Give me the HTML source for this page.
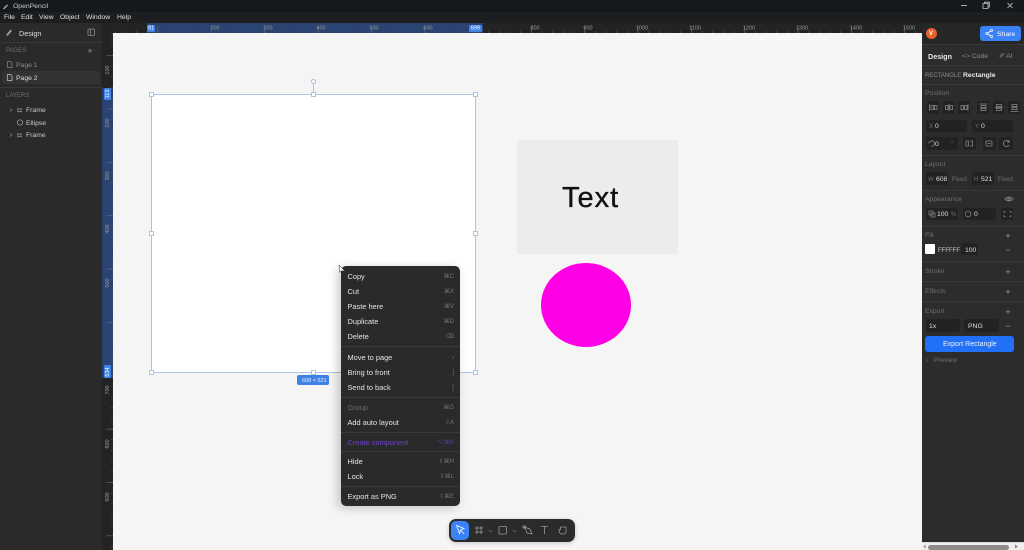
<!DOCTYPE html>
<html><head><meta charset="utf-8"><title>OpenPencil</title>
<style>
html,body{margin:0;padding:0;width:1024px;height:550px;overflow:hidden;background:#2b2b2b}
#r{position:relative;width:1024px;height:550px;overflow:hidden;font-family:"Liberation Sans",sans-serif;filter:blur(.25px)}
#r div,#r span.t{position:absolute}
.t{position:absolute;white-space:nowrap;line-height:10px;font-size:6.8px;color:#d8d8d8;transform:translateY(-4px)}
.g{color:#8a8a8a}.d{color:#6f6f6f}.b{font-weight:bold;color:#e8e8e8}
.line{height:1px;background:#383838}
.f{background:#222;border-radius:2px}
.m{left:347.5px;font-size:7.4px;color:#e4e4e4}
.k{right:570px;font-size:6px;color:#777;text-align:right}
.rl{font-size:5.5px;color:#9a9a9a;transform:translate(-50%,-4.5px)}
.rv{font-size:5.5px;color:#9a9a9a;left:108px;transform:translate(-50%,-50%) rotate(-90deg)}
.h{width:2.5px;height:2.5px;background:#fff;border:1px solid #a8c6ec}
.sep{left:341px;width:119px;height:1px;background:#3a3a3a}
.p{font-size:9px;color:#999;line-height:10px;text-align:center;width:10px}
svg{position:absolute;overflow:visible}
</style></head><body><div id="r">

<!-- chrome -->
<div style="left:0;top:0;width:1024px;height:12px;background:#14191c"></div>
<div style="left:0;top:12px;width:1024px;height:11px;background:#1c1e1f"></div>
<div style="left:0;top:23px;width:102px;height:527px;background:#2a2a2a"></div>
<div style="left:102px;top:23px;width:820px;height:10px;background:#232323"></div>
<div style="left:102px;top:23px;width:11px;height:527px;background:#232323"></div>
<div style="left:113px;top:33px;width:809px;height:517px;background:#f5f5f5"></div>
<div style="left:922px;top:23px;width:102px;height:527px;background:#2c2c2c"></div>

<!-- title -->
<svg style="left:0;top:0" width="12" height="12"><path d="M3 8.500L7 4.500L8 5.500L4 9.500Z" fill="#aaa"/></svg>
<span class="t" style="left:13px;top:6px;color:#c8c8c8">OpenPencil</span>
<span class="t" style="left:4px;top:17px;color:#e0e0e0">File</span>
<span class="t" style="left:21px;top:17px;color:#e0e0e0">Edit</span>
<span class="t" style="left:39px;top:17px;color:#e0e0e0">View</span>
<span class="t" style="left:60px;top:17px;color:#e0e0e0">Object</span>
<span class="t" style="left:86px;top:17px;color:#e0e0e0">Window</span>
<span class="t" style="left:117px;top:17px;color:#e0e0e0">Help</span>
<svg style="left:955px;top:0" width="69" height="12" fill="none" stroke="#ccc" stroke-width=".8"><path d="M6 5.500H12"/><path d="M28 3.500H33V8.500H28ZM29.500 3.500V2.200H34.300V7H33"/><path d="M52.500 3L57.500 8M57.500 3L52.500 8"/></svg>

<!-- left panel -->
<svg style="left:4px;top:27px" width="10" height="10"><path d="M2 8L6.500 2.500L8 4L3.500 9Z" fill="#999"/></svg>
<span class="t" style="left:19px;top:32.500px;font-size:7.200px;color:#ddd">Design</span>
<svg style="left:87px;top:28px" width="9" height="9" fill="none" stroke="#8a8a8a" stroke-width=".8"><rect x="1" y="1" width="6.500" height="6.500" rx="1"/><path d="M3.500 1V7.500"/></svg>
<div class="line" style="left:0;top:42px;width:102px"></div>
<span class="t d" style="left:6px;top:50px;font-size:6px">PAGES</span>
<span class="t p" style="left:85px;top:50px">+</span>
<svg style="left:7px;top:61px" width="6" height="20" fill="none" stroke="#888" stroke-width=".7"><path d="M.5 .5H3.500L5 2V6.500H.5Z"/></svg>
<span class="t g" style="left:16px;top:64.500px">Page 1</span>
<div style="left:2px;top:71px;width:98px;height:13px;background:#333;border-radius:2px"></div>
<svg style="left:7px;top:74px" width="6" height="8" fill="none" stroke="#ccc" stroke-width=".7"><path d="M.5 .5H3.500L5 2V6.500H.5Z"/></svg>
<span class="t" style="left:16px;top:77.500px;color:#ddd">Page 2</span>
<div class="line" style="left:0;top:87px;width:102px"></div>
<span class="t d" style="left:6px;top:95px;font-size:6px">LAYERS</span>
<svg style="left:8px;top:105px" width="20" height="36" fill="none" stroke="#888" stroke-width=".7"><path d="M2 3.500L4 5L2 6.500M2 28.500L4 30L2 31.500"/><path d="M10 3V7.500M13 3V7.500M9 4H14M9 6.500H14M10 28V32.500M13 28V32.500M9 29H14M9 31.500H14"/><circle cx="12" cy="17.500" r="2.700" stroke="#aaa"/></svg>
<span class="t" style="left:26px;top:110px;color:#ccc">Frame</span>
<span class="t" style="left:26px;top:122.500px;color:#ccc">Ellipse</span>
<span class="t" style="left:26px;top:135px;color:#ccc">Frame</span>

<!-- rulers -->
<div style="left:147px;top:23px;width:336px;height:10px;background:#2a4370"></div>
<div style="left:102px;top:88px;width:11px;height:290px;background:#2a4370"></div>
<svg style="left:0;top:0" width="1024" height="550">
<defs>
<pattern id="tm" x="104.200" y="0" width="10.670" height="10" patternUnits="userSpaceOnUse"><rect width=".6" height="10" fill="#5c5c5c"/></pattern>
<pattern id="lm" x="0" y="2" width="10" height="10.670" patternUnits="userSpaceOnUse"><rect width="10" height=".6" fill="#5c5c5c"/></pattern>
<pattern id="tM" x="104.200" y="0" width="53.350" height="10" patternUnits="userSpaceOnUse"><rect width=".6" height="10" fill="#6a6a6a"/></pattern>
<pattern id="lM" x="0" y="2" width="10" height="53.350" patternUnits="userSpaceOnUse"><rect width="10" height=".6" fill="#6a6a6a"/></pattern>
</defs>
<rect x="113" y="31" width="809" height="2" fill="url(#tm)"/>
<rect x="113" y="26" width="809" height="7" fill="url(#tM)"/>
<rect x="111" y="33" width="2" height="517" fill="url(#lm)"/>
<rect x="106" y="33" width="7" height="517" fill="url(#lM)"/>
</svg>
<span class="t rl" style="left:215px;top:28px">200</span><span class="t rl" style="left:268px;top:28px">300</span><span class="t rl" style="left:321px;top:28px">400</span><span class="t rl" style="left:374px;top:28px">500</span><span class="t rl" style="left:428px;top:28px">600</span>
<span class="t rl" style="left:535px;top:28px">800</span><span class="t rl" style="left:588px;top:28px">900</span><span class="t rl" style="left:642px;top:28px">1000</span><span class="t rl" style="left:695px;top:28px">1100</span><span class="t rl" style="left:749px;top:28px">1200</span><span class="t rl" style="left:802px;top:28px">1300</span><span class="t rl" style="left:856px;top:28px">1400</span><span class="t rl" style="left:909px;top:28px">1500</span>
<div style="left:147px;top:24.500px;width:8px;height:7px;background:#3f82e6;border-radius:1px"></div>
<span class="t rl" style="left:151px;top:28px;color:#fff">91</span>
<div style="left:469px;top:24.500px;width:13px;height:7px;background:#3f82e6;border-radius:1px"></div>
<span class="t rl" style="left:475.500px;top:28px;color:#fff">699</span>
<span class="t rv" style="top:70px">100</span><span class="t rv" style="top:123px">200</span><span class="t rv" style="top:176px">300</span><span class="t rv" style="top:229px">400</span><span class="t rv" style="top:283px">500</span><span class="t rv" style="top:390px">700</span><span class="t rv" style="top:444px">800</span><span class="t rv" style="top:497px">900</span>
<div style="left:104px;top:88px;width:7px;height:12px;background:#3f82e6;border-radius:1px"></div>
<span class="t rv" style="top:94px;color:#fff">113</span>
<div style="left:104px;top:365px;width:7px;height:13px;background:#3f82e6;border-radius:1px"></div>
<span class="t rv" style="top:371.500px;color:#fff">634</span>

<!-- frame -->
<div style="left:150.500px;top:93.500px;width:325px;height:279px;background:#fff;box-sizing:border-box;border:1px solid #a8c6ec"></div>
<div style="left:312.500px;top:83px;width:1px;height:11px;background:#a8c6ec"></div>
<div style="left:310.500px;top:79px;width:3px;height:3px;border:1px solid #9dbfe8;border-radius:50%;background:#fff"></div>
<div class="h" style="left:149px;top:92px"></div><div class="h" style="left:311px;top:92px"></div><div class="h" style="left:473px;top:92px"></div>
<div class="h" style="left:149px;top:231px"></div><div class="h" style="left:473px;top:231px"></div>
<div class="h" style="left:149px;top:370px"></div><div class="h" style="left:311px;top:370px"></div><div class="h" style="left:473px;top:370px"></div>
<div style="left:297px;top:375px;width:32px;height:10px;background:#3f82e6;border-radius:2px"></div>
<span class="t" style="left:302px;top:380px;font-size:5.500px;color:#e8f0ff">608 × 521</span>

<!-- shapes -->
<div style="left:517px;top:140px;width:161px;height:114px;background:#eeecea"></div>
<span class="t" style="left:562px;top:198px;font-size:29px;line-height:30px;color:#111;transform:translateY(-15px);letter-spacing:1px;-webkit-text-stroke:.35px #111">Text</span>
<div style="left:541px;top:263px;width:90px;height:84px;background:#ff00e6;border-radius:50%"></div>

<!-- toolbar -->
<div style="left:449px;top:519px;width:126px;height:23px;background:#2b2b2b;border-radius:7px;box-shadow:0 1px 5px rgba(0,0,0,.2)"></div>
<div style="left:451px;top:521px;width:18px;height:19px;background:#3b82f6;border-radius:5px"></div>
<svg style="left:449px;top:519px" width="126" height="23" fill="none" stroke="#999" stroke-width=".8">
<path d="M7.500 6.500L15 9.500L11.500 11L10.500 14.500Z" stroke="#fff"/><path d="M11.500 11L15 15" stroke="#fff"/>
<path d="M28 7V15M32 7V15M26 9H34M26 13H34"/>
<path d="M40 11.500L41.500 13L43 11.500" stroke-width=".6" stroke="#777"/>
<rect x="50" y="7.500" width="7.500" height="7.500" rx="1"/>
<path d="M64 11.500L65.500 13L67 11.500" stroke-width=".6" stroke="#777"/>
<path d="M75 8L81 10L83 15L78 14L76 9Z"/><path d="M74 7H76.500V9H74Z"/>
<path d="M92 7.500H99M95.500 7.500V15"/>
<path d="M112 15C110.500 14 110 12 110 10.500H111.500V8H117V10.500V13C117 14 116 15 115 15Z"/>
</svg>

<!-- context menu -->
<div style="left:341px;top:266px;width:119px;height:240px;background:#2a2a2a;border-radius:5px;box-shadow:-3px 2px 10px rgba(0,0,0,.22)"></div>
<span class="t m" style="top:275.500px">Copy</span><span class="t k" style="top:275.500px;right:570px">⌘C</span>
<span class="t m" style="top:290.500px">Cut</span><span class="t k" style="top:290.500px">⌘X</span>
<span class="t m" style="top:305.500px">Paste here</span><span class="t k" style="top:305.500px">⌘V</span>
<span class="t m" style="top:320.500px">Duplicate</span><span class="t k" style="top:320.500px">⌘D</span>
<span class="t m" style="top:335.500px">Delete</span><span class="t k" style="top:335.500px">⌫</span>
<div class="sep" style="top:346px"></div>
<span class="t m" style="top:356.500px">Move to page</span><span class="t k" style="top:356.500px">›</span>
<span class="t m" style="top:372px">Bring to front</span><span class="t k" style="top:372px">]</span>
<span class="t m" style="top:387px">Send to back</span><span class="t k" style="top:387px">[</span>
<div class="sep" style="top:397px"></div>
<span class="t m" style="top:407px;color:#6a6a6a">Group</span><span class="t k" style="top:407px">⌘G</span>
<span class="t m" style="top:422px">Add auto layout</span><span class="t k" style="top:422px">⇧A</span>
<div class="sep" style="top:432px"></div>
<span class="t m" style="top:441.500px;color:#6f42c8">Create component</span><span class="t k" style="top:441.500px;color:#5a3fa0">⌥⌘K</span>
<div class="sep" style="top:451px"></div>
<span class="t m" style="top:461px">Hide</span><span class="t k" style="top:461px">⇧⌘H</span>
<span class="t m" style="top:476px">Lock</span><span class="t k" style="top:476px">⇧⌘L</span>
<div class="sep" style="top:486px"></div>
<span class="t m" style="top:496px">Export as PNG</span><span class="t k" style="top:496px">⇧⌘E</span>
<svg style="left:338px;top:264px" width="10" height="12"><path d="M1 1L1.500 8.500L3.500 6.800L7 7Z" fill="#fff" stroke="#222" stroke-width=".5"/></svg>

<!-- right panel -->
<div style="left:922px;top:23px;width:102px;height:21px;background:#262626"></div>
<div style="left:925.500px;top:27.500px;width:11px;height:11px;border-radius:50%;background:#e8602c"></div>
<span class="t" style="left:929px;top:33px;font-size:6px;color:#fff;font-weight:bold">V</span>
<div style="left:980px;top:26px;width:41px;height:15px;background:#3b82f6;border-radius:3px"></div>
<svg style="left:985px;top:29px" width="9" height="9" fill="none" stroke="#fff" stroke-width=".8"><circle cx="6.500" cy="1.500" r="1"/><circle cx="1.800" cy="4.500" r="1"/><circle cx="6.500" cy="7.500" r="1"/><path d="M5.600 2L2.700 4M2.700 5L5.600 7"/></svg>
<span class="t" style="left:997px;top:33.500px;color:#fff">Share</span>
<div class="line" style="left:922px;top:44px;width:102px"></div>
<span class="t b" style="left:928px;top:55.500px;font-size:7.200px">Design</span>
<span class="t g" style="left:962px;top:55.500px">&lt;&gt; Code</span>
<span class="t g" style="left:999px;top:55.500px">✐ AI</span>
<div class="line" style="left:922px;top:65px;width:102px"></div>
<span class="t g" style="left:925px;top:75px;font-size:6px">RECTANGLE</span>
<span class="t b" style="left:963px;top:75px">Rectangle</span>
<div class="line" style="left:922px;top:84px;width:102px"></div>
<span class="t d" style="left:925px;top:93px">Position</span>
<div class="f" style="left:927px;top:101px;width:12px;height:13px"></div><div class="f" style="left:943px;top:101px;width:11px;height:13px"></div><div class="f" style="left:958px;top:101px;width:12px;height:13px"></div><div class="f" style="left:977px;top:101px;width:12px;height:13px"></div><div class="f" style="left:993px;top:101px;width:11px;height:13px"></div><div class="f" style="left:1008px;top:101px;width:12px;height:13px"></div>
<svg style="left:927px;top:101px" width="94" height="13" fill="none" stroke="#888" stroke-width=".8"><path d="M2.500 3V10M4 4.500H6.500V8.500H4ZM7.500 4.500H10V8.500H7.500Z"/><path d="M22 3V10M18.500 4.500H21V8.500H18.500ZM23 4.500H25.500V8.500H23Z"/><path d="M41 3V10M34 4.500H36.500V8.500H34ZM37.500 4.500H40V8.500H37.500Z"/><path d="M52.500 3H60.500M54 4.500H59V6.500H54ZM54 7.500H59V9.500H54Z"/><path d="M68 6.500H76M69.500 3.500H74.500V5.500H69.500ZM69.500 7.500H74.500V9.500H69.500Z"/><path d="M83.500 10.500H91.500M85 3.500H90V5.500H85ZM85 6.500H90V8.500H85Z"/></svg>
<div class="f" style="left:926px;top:120px;width:41px;height:12px"></div><div class="f" style="left:972px;top:120px;width:41px;height:12px"></div>
<span class="t d" style="left:929px;top:126px;font-size:6px">X</span><span class="t" style="left:935px;top:126px;color:#ddd">0</span>
<span class="t d" style="left:975px;top:126px;font-size:6px">Y</span><span class="t" style="left:981px;top:126px;color:#ddd">0</span>
<div class="f" style="left:926px;top:137px;width:32px;height:13px"></div><div class="f" style="left:963px;top:137px;width:13px;height:13px"></div><div class="f" style="left:983px;top:137px;width:13px;height:13px"></div><div class="f" style="left:999px;top:137px;width:14px;height:13px"></div>
<svg style="left:926px;top:137px" width="88" height="13" fill="none" stroke="#888" stroke-width=".8"><path d="M3 6.500A2.700 2.700 0 1 1 5.500 9.200"/><path d="M40 4H42.500V9H40ZM44 4H46.500V9H44"/><rect x="60" y="4" width="6" height="5" rx=".7"/><path d="M61.500 6.500H64.500"/><path d="M83 5A3 3 0 1 0 83 8M83 3V5.200H81"/></svg>
<span class="t" style="left:935px;top:143.500px;color:#ddd">0</span><span class="t d" style="left:951px;top:143px;font-size:6px">°</span>
<div class="line" style="left:922px;top:155px;width:102px"></div>
<span class="t d" style="left:925px;top:164px">Layout</span>
<div class="f" style="left:926px;top:172px;width:22px;height:13px"></div><div class="f" style="left:972px;top:172px;width:22px;height:13px"></div>
<span class="t d" style="left:928px;top:178.500px;font-size:6px">W</span><span class="t" style="left:936px;top:178.500px;color:#ddd;width:12px;overflow:hidden">608</span>
<span class="t d" style="left:952px;top:178.500px;font-size:6px">Fixed</span>
<span class="t d" style="left:974px;top:178.500px;font-size:6px">H</span><span class="t" style="left:981px;top:178.500px;color:#ddd">521</span>
<span class="t d" style="left:998px;top:178.500px;font-size:6px">Fixed</span>
<div class="line" style="left:922px;top:190px;width:102px"></div>
<span class="t d" style="left:925px;top:199px">Appearance</span>
<svg style="left:1004px;top:195px" width="10" height="8" fill="none" stroke="#888" stroke-width=".8"><path d="M1 4C3 1.500 7 1.500 9 4C7 6.500 3 6.500 1 4Z"/><circle cx="5" cy="4" r="1.200"/></svg>
<div class="f" style="left:926px;top:208px;width:32px;height:12px"></div><div class="f" style="left:963px;top:208px;width:33px;height:12px"></div><div class="f" style="left:1001px;top:208px;width:12px;height:12px"></div>
<svg style="left:926px;top:208px" width="88" height="12" fill="none" stroke="#888" stroke-width=".7"><rect x="3" y="3" width="4" height="4"/><rect x="5" y="5" width="4" height="4"/><circle cx="42" cy="6" r="2.800"/><path d="M78 5V3.500H79.500M83.500 3.500H85V5M85 7V8.500H83.500M79.500 8.500H78V7"/></svg>
<span class="t" style="left:937px;top:214px;color:#ddd">100</span><span class="t d" style="left:951px;top:214px;font-size:6px">%</span>
<span class="t" style="left:974px;top:214px;color:#ddd">0</span>
<div class="line" style="left:922px;top:226px;width:102px"></div>
<span class="t d" style="left:925px;top:235px">Fill</span><span class="t p" style="left:1003px;top:235px">+</span>
<div style="left:925px;top:244px;width:10px;height:10px;background:#fff;border-radius:1px"></div>
<span class="t" style="left:938px;top:249.500px;color:#ccc;font-size:6px">FFFFFF</span>
<div class="f" style="left:961px;top:243px;width:17px;height:12px"></div>
<span class="t" style="left:965px;top:249.500px;color:#ddd">100</span>
<span class="t p" style="left:1003px;top:248.500px">−</span>
<div class="line" style="left:922px;top:261px;width:102px"></div>
<span class="t d" style="left:925px;top:270.500px">Stroke</span><span class="t p" style="left:1003px;top:271px">+</span>
<div class="line" style="left:922px;top:281px;width:102px"></div>
<span class="t d" style="left:925px;top:290.500px">Effects</span><span class="t p" style="left:1003px;top:291px">+</span>
<div class="line" style="left:922px;top:301px;width:102px"></div>
<span class="t d" style="left:925px;top:310.500px">Export</span><span class="t p" style="left:1003px;top:311px">+</span>
<div class="f" style="left:926px;top:319px;width:34px;height:13px"></div><div class="f" style="left:964px;top:319px;width:35px;height:13px"></div>
<span class="t" style="left:929px;top:325.500px;color:#ddd">1x</span><span class="t" style="left:968px;top:325.500px;color:#ddd">PNG</span>
<span class="t p" style="left:1003px;top:324.500px">−</span>
<div style="left:925px;top:336px;width:89px;height:16px;background:#2170f5;border-radius:3px"></div>
<span class="t" style="left:943px;top:344px;color:#f0f4ff;font-size:7px">Export Rectangle</span>
<span class="t d" style="left:926px;top:360px;font-size:6px">›</span><span class="t d" style="left:934px;top:360px;font-size:6.500px">Preview</span>

<!-- scrollbar -->
<div style="left:922px;top:542px;width:102px;height:1px;background:#d8d8d8"></div>
<div style="left:922px;top:543px;width:102px;height:7px;background:#efefef"></div>
<div style="left:928px;top:544.500px;width:81px;height:5px;background:#8c8c8c;border-radius:3px"></div>
<svg style="left:922px;top:543px" width="102" height="7"><path d="M3.500 1.500L1.500 3.500L3.500 5.500Z" fill="#888"/><path d="M93 1.500L96 3.500L93 5.500Z" fill="#888"/></svg>

</div></body></html>
